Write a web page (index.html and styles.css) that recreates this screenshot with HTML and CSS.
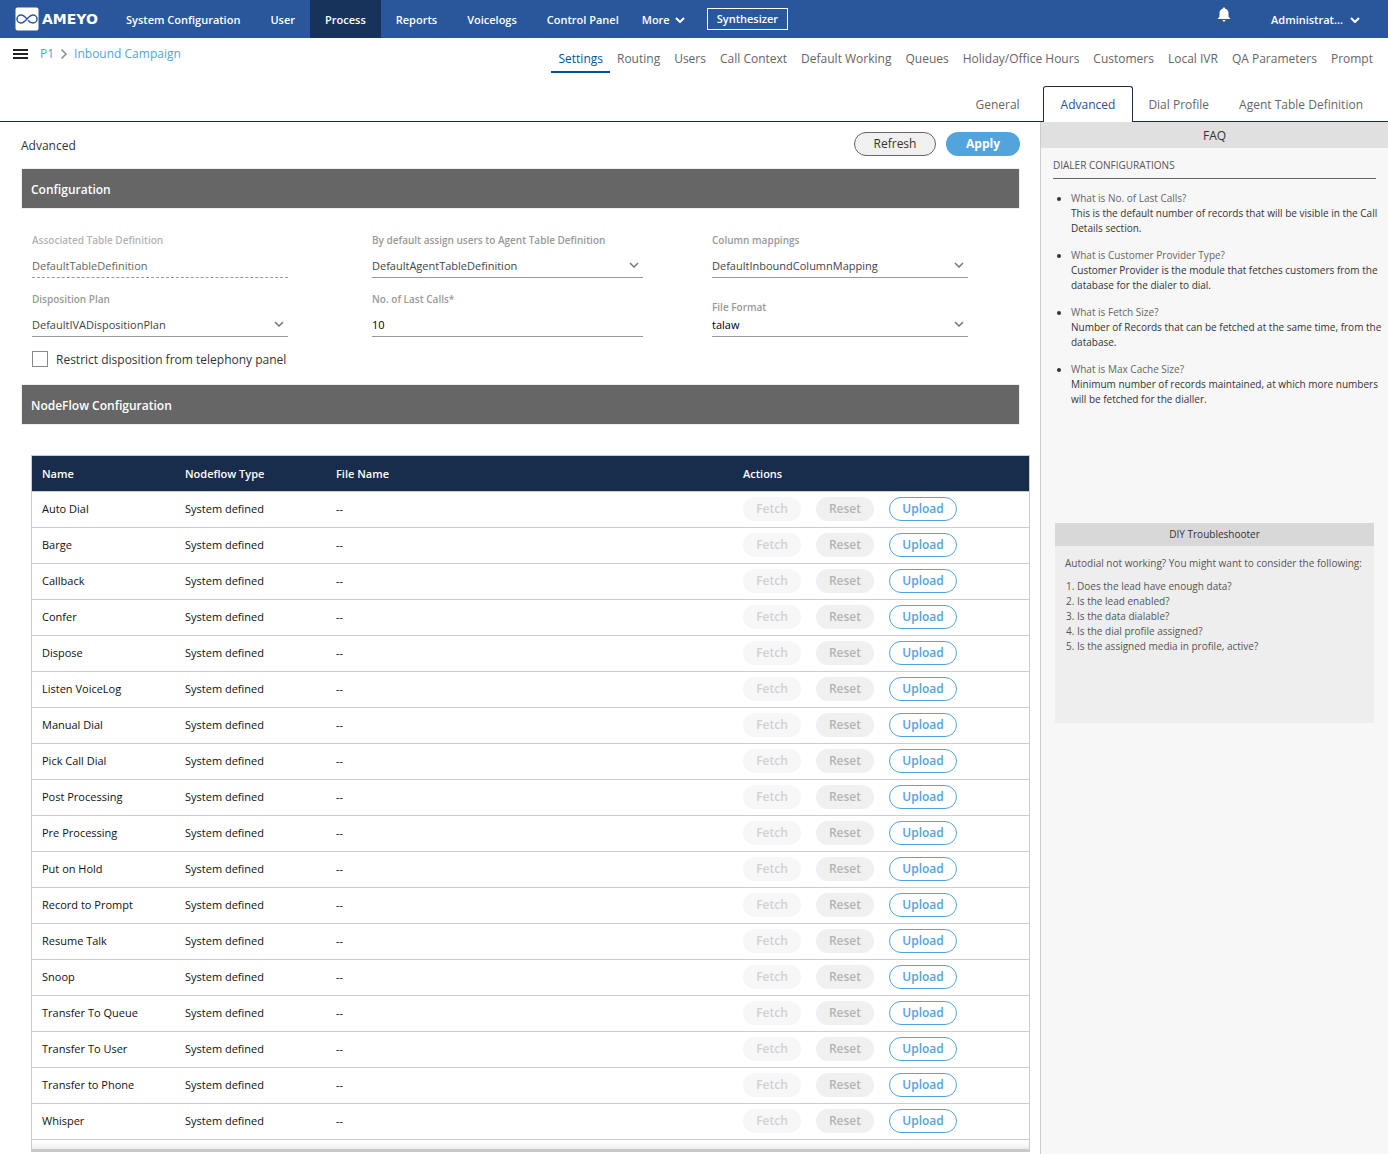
FILE: index.html
```html
<!DOCTYPE html>
<html lang="en">
<head>
    <meta charset="UTF-8">
    <meta name="viewport" content="width=device-width, initial-scale=1.0">
    <title>Ameyo - Inbound Campaign</title>
    <link rel="stylesheet" href="styles.css">
</head>
<body>
    <header class="topbar">
        <a class="logo" href="#" aria-label="Ameyo">
            <svg width="24" height="24" viewBox="0 0 24 24">
                <rect x="0.5" y="0.5" width="23" height="23" rx="2" fill="#fff"/>
                <path d="M12 12C9.5 9 8 8 6 8a4 4 0 0 0 0 8c2.500 0 4-1.700 6-4s3.500-4 6-4a4 4 0 0 1 0 8c-2 0-3.500-1-5-2.800" fill="none" stroke="#2a579b" stroke-width="1.5"/>
            </svg>
            <span>AMEYO</span>
        </a>
        <nav class="main-nav">
            <a href="#">System Configuration</a>
            <a href="#">User</a>
            <a href="#" class="active">Process</a>
            <a href="#">Reports</a>
            <a href="#">Voicelogs</a>
            <a href="#">Control Panel</a>
            <a href="#" class="more">More
                <svg width="10" height="6" viewBox="0 0 10 6"><path d="M1 1l4 4 4-4" fill="none" stroke="#fff" stroke-width="2"/></svg>
            </a>
        </nav>
        <button type="button" class="synth">Synthesizer</button>
        <button type="button" class="bell" aria-label="Notifications">
            <svg width="14" height="15" viewBox="0 0 14 15"><path d="M7 .5c.8 0 1.200.5 1.200 1.200 2 .5 3.300 2.100 3.300 4.300v3.500L13.500 12H.5l2-2.500V6c0-2.200 1.300-3.800 3.300-4.300C5.800 1 6.200.5 7 .5zM5.500 13h3c0 .9-.7 1.500-1.500 1.500S5.500 13.900 5.500 13z" fill="#fff"/></svg>
        </button>
        <button type="button" class="account">Administrat...
            <svg width="10" height="6" viewBox="0 0 10 6"><path d="M1 1l4 4 4-4" fill="none" stroke="#fff" stroke-width="2"/></svg>
        </button>
    </header>

    <div class="subbar">
        <div class="crumbs">
            <button type="button" class="menu" aria-label="Menu"><i></i><i></i><i></i></button>
            <a href="#">P1</a>
            <svg width="8" height="10" viewBox="0 0 8 10"><path d="M1.5 .5L6 5 1.500 9.500" fill="none" stroke="#8a8a8a" stroke-width="1.5"/></svg>
            <a href="#">Inbound Campaign</a>
        </div>
        <nav class="sub-nav">
            <a href="#" class="active">Settings</a>
            <a href="#">Routing</a>
            <a href="#">Users</a>
            <a href="#">Call Context</a>
            <a href="#">Default Working</a>
            <a href="#">Queues</a>
            <a href="#">Holiday/Office Hours</a>
            <a href="#">Customers</a>
            <a href="#">Local IVR</a>
            <a href="#">QA Parameters</a>
            <a href="#">Prompt</a>
        </nav>
    </div>

    <nav class="tabs">
        <a href="#">General</a>
        <a href="#" class="active">Advanced</a>
        <a href="#">Dial Profile</a>
        <a href="#">Agent Table Definition</a>
    </nav>

    <div class="page">
        <main class="content">
            <div class="title-row">
                <h1>Advanced</h1>
                <button type="button" class="btn-refresh">Refresh</button>
                <button type="button" class="btn-apply">Apply</button>
            </div>

            <h2 class="section-bar">Configuration</h2>
            <form class="config">
                <div class="field disabled">
                    <label for="tableDef">Associated Table Definition</label>
                    <input type="text" id="tableDef" value="DefaultTableDefinition" disabled>
                </div>
                <div class="field wide">
                    <label for="agentDef">By default assign users to Agent Table Definition</label>
                    <select id="agentDef"><option>DefaultAgentTableDefinition</option></select>
                </div>
                <div class="field">
                    <label for="mapping">Column mappings</label>
                    <select id="mapping"><option>DefaultInboundColumnMapping</option></select>
                </div>
                <div class="field">
                    <label for="plan">Disposition Plan</label>
                    <select id="plan"><option>DefaultIVADispositionPlan</option></select>
                </div>
                <div class="field wide">
                    <label for="lastCalls">No. of Last Calls*</label>
                    <input type="text" id="lastCalls" class="dark" value="10">
                </div>
                <div class="field close">
                    <label for="format">File Format</label>
                    <select id="format" class="dark"><option>talaw</option></select>
                </div>
                <div class="check">
                    <input type="checkbox" id="restrict">
                    <label for="restrict">Restrict disposition from telephony panel</label>
                </div>
            </form>

            <h2 class="section-bar">NodeFlow Configuration</h2>
            <div class="table-box">
                <table>
                    <thead>
                        <tr>
                            <th class="col-name">Name</th>
                            <th class="col-type">Nodeflow Type</th>
                            <th class="col-file">File Name</th>
                            <th>Actions</th>
                        </tr>
                    </thead>
                    <tbody id="nodeflows"></tbody>
                </table>
            </div>
        </main>

        <aside class="help">
            <h2>FAQ</h2>
            <section class="faq">
                <h3>DIALER CONFIGURATIONS</h3>
                <ul>
                    <li><span>What is No. of Last Calls?</span><p>This is the default number of records that will be visible in the Call Details section.</p></li>
                    <li><span>What is Customer Provider Type?</span><p>Customer Provider is the module that fetches customers from the database for the dialer to dial.</p></li>
                    <li><span>What is Fetch Size?</span><p>Number of Records that can be fetched at the same time, from the database.</p></li>
                    <li><span>What is Max Cache Size?</span><p>Minimum number of records maintained, at which more numbers will be fetched for the dialler.</p></li>
                </ul>
            </section>
            <section class="diy">
                <h3>DIY Troubleshooter</h3>
                <p>Autodial not working? You might want to consider the following:</p>
                <ol>
                    <li>Does the lead have enough data?</li>
                    <li>Is the lead enabled?</li>
                    <li>Is the data dialable?</li>
                    <li>Is the dial profile assigned?</li>
                    <li>Is the assigned media in profile, active?</li>
                </ol>
            </section>
        </aside>
    </div>

    <script>
        const nodeflows = ["Auto Dial", "Barge", "Callback", "Confer", "Dispose", "Listen VoiceLog",
            "Manual Dial", "Pick Call Dial", "Post Processing", "Pre Processing", "Put on Hold",
            "Record to Prompt", "Resume Talk", "Snoop", "Transfer To Queue", "Transfer To User",
            "Transfer to Phone", "Whisper"];

        document.getElementById("nodeflows").innerHTML = nodeflows.map(name => `
            <tr>
                <td>${name}</td>
                <td>System defined</td>
                <td>--</td>
                <td>
                    <div class="actions">
                        <button type="button" class="fetch" disabled>Fetch</button>
                        <button type="button" class="reset" disabled>Reset</button>
                        <button type="button" class="upload">Upload</button>
                    </div>
                </td>
            </tr>`).join("");
    </script>
</body>
</html>
```
FILE: styles.css
```css
* {
    box-sizing: border-box;
}
body {
    margin: 0;
    min-height: 100vh;
    display: flex;
    flex-direction: column;
    font-family: "Open Sans", "Noto Sans", sans-serif;
    font-size: 12px;
    line-height: 16px;
    color: #333;
    background: #fff;
}
a {
    color: inherit;
    text-decoration: none;
}
h1, h2, h3, p, ul, ol {
    margin: 0;
    padding: 0;
    font-weight: 400;
}
button, input, select {
    font: inherit;
    color: inherit;
    margin: 0;
}
button {
    padding: 0;
    border: none;
    background: none;
    cursor: pointer;
}

/* top bar */
.topbar {
    display: flex;
    align-items: center;
    height: 38px;
    padding: 0 28px 0 15px;
    background: #2a579b;
    color: #fff;
    font-size: 11px;
    font-weight: 600;
}
.logo {
    display: flex;
    align-items: center;
    gap: 3px;
    width: 96px;
    font: bold 14px "DejaVu Sans", sans-serif;
}
.main-nav {
    display: flex;
    align-self: stretch;
}
.main-nav a {
    display: flex;
    align-items: center;
    padding: 2px 15px 0;
}
.main-nav .active {
    background: #18335b;
}
.main-nav .more {
    gap: 5px;
    padding: 2px 22px 0 8px;
}
.synth {
    height: 22px;
    padding: 0 9px;
    border: 1px solid #fff;
}
.bell {
    margin: 0 40px 8px auto;
    height: 16px;
}
.account {
    display: flex;
    align-items: center;
    gap: 7px;
    padding-top: 2px;
}

/* breadcrumb and sub navigation */
.subbar {
    display: flex;
    justify-content: space-between;
    height: 48px;
    padding: 0 8px 0 13px;
}
.crumbs {
    display: flex;
    align-items: center;
    gap: 6px;
    height: 32px;
    color: #51a4dc;
}
.menu {
    display: flex;
    flex-direction: column;
    gap: 2px;
    margin-right: 6px;
}
.menu i {
    width: 15px;
    height: 2px;
    background: #222;
}
.sub-nav {
    display: flex;
    height: 35px;
    color: #666;
    font-weight: 500;
}
.sub-nav a {
    padding: 13px 7px 0;
}
.sub-nav .active {
    color: #00539b;
    border-bottom: 2px solid #00539b;
}

/* tabs */
.tabs {
    display: flex;
    justify-content: flex-end;
    height: 36px;
    padding-right: 10px;
    border-bottom: 1px solid #182c4c;
    color: #666;
    font-weight: 500;
}
.tabs a {
    height: 36px;
    padding: 10px 14px 0;
    border: 1px solid transparent;
    border-bottom: none;
}
.tabs .active {
    margin-left: 8px;
    padding: 10px 17px 0;
    border-color: #182c4c;
    border-radius: 3px 3px 0 0;
    background: #fff;
    color: #2a4f9b;
}

.page {
    display: flex;
    flex: 1;
}
.content {
    flex: 1;
    padding: 0 20px 0 21px;
}
.title-row {
    display: flex;
    align-items: center;
    gap: 10px;
    height: 46px;
    padding-bottom: 2px;
}
.title-row h1 {
    flex: 1;
    padding-top: 4px;
    font-size: 12px;
}
.btn-refresh, .btn-apply {
    height: 24px;
    border-radius: 12px;
}
.btn-refresh {
    width: 82px;
    border: 1px solid #666;
    background: #f0f0f0;
    font-weight: 500;
}
.btn-apply {
    width: 74px;
    background: #51a4dc;
    color: #fff;
    font-weight: 700;
}
.section-bar {
    height: 41px;
    padding: 0 9px;
    border: 1px solid #eee;
    background: #666;
    color: #fff;
    font-size: 12px;
    font-weight: 600;
    line-height: 41px;
}

/* configuration form */
.config {
    display: grid;
    grid-template-columns: 340px 340px 1fr;
    grid-template-rows: 59px 59px 33px;
    padding: 24px 0 0 11px;
}
.field {
    display: flex;
    flex-direction: column;
    gap: 5px;
    width: 256px;
}
.field label {
    color: #999;
    font-size: 10px;
    font-weight: 600;
    line-height: 15px;
}
.wide {
    width: 271px;
}
.close {
    gap: 0;
    padding-top: 11px;
}
.close label {
    line-height: 9px;
}
.field input, .field select {
    width: 100%;
    height: 25px;
    padding: 0;
    border: none;
    border-bottom: 1px solid #999;
    border-radius: 0;
    outline: none;
    appearance: none;
    background: none;
    color: #444;
    font-size: 11px;
}
.field select {
    padding-top: 1px;
    background: url("data:image/svg+xml,%3Csvg xmlns='http://www.w3.org/2000/svg' width='10' height='6'%3E%3Cpath d='M1 1l4 4 4-4' fill='none' stroke='%23777' stroke-width='1.500'/%3E%3C/svg%3E") no-repeat right 4px center;
}
.field .dark {
    color: #000;
}
.disabled label {
    color: #b3b3b3;
}
.disabled input {
    border-bottom-style: dashed;
    color: #666;
}
.check {
    display: flex;
    gap: 8px;
    grid-column: 1 / -1;
    line-height: 17px;
}
.check input {
    appearance: none;
    width: 16px;
    height: 16px;
    border: 1px solid #888;
    background: #fff;
}

/* nodeflow table */
.table-box {
    margin: 30px -10px 0 10px;
    padding-bottom: 9px;
    border: 1px solid #ccc;
    border-bottom: 3px solid #c8c8c8;
    background: linear-gradient(to top, #eee, #fff 8px);
}
table {
    width: 100%;
    border-collapse: collapse;
    table-layout: fixed;
    background: #fff;
    color: #111;
    font-size: 11px;
}
th, td {
    height: 36px;
    padding: 0 0 0 10px;
    border-bottom: 1px solid #ccc;
    text-align: left;
}
th {
    height: 35px;
    padding-top: 2px;
    background: #182c4c;
    color: #fff;
    font-weight: 600;
}
.col-name {
    width: 143px;
}
.col-type {
    width: 151px;
}
.col-file {
    width: 407px;
}
.actions {
    display: flex;
    gap: 15px;
}
.actions button {
    width: 58px;
    height: 24px;
    border-radius: 12px;
    font-size: 12px;
    font-weight: 600;
}
.actions .fetch {
    background: #f7f7f7;
    color: #d0d0d0;
}
.actions .reset {
    background: #f0f0f0;
    color: #b3b3b3;
}
.actions .upload {
    width: 68px;
    border: 1px solid #51a4dc;
    background: #fff;
    color: #51a4dc;
}

/* help column */
.help {
    flex: 0 0 348px;
    border-left: 1px solid #ccc;
    background: #f7f7f7;
    font-size: 10px;
    line-height: 15px;
}
.help h2 {
    height: 26px;
    background: #e0e0e0;
    font-size: 12px;
    line-height: 27px;
    text-align: center;
}
.faq {
    min-height: 375px;
    padding: 9px 12px 0;
}
.faq h3 {
    height: 22px;
    margin-bottom: 12px;
    border-bottom: 1px solid #666;
    color: #555;
    font-size: 10px;
    line-height: 17px;
}
.faq li {
    margin: 0 -12px 12px 18px;
}
.faq span {
    color: #666;
}
.diy {
    min-height: 200px;
    margin: 0 14px;
    background: #eee;
    color: #555;
}
.diy h3 {
    height: 23px;
    background: #d8d8d8;
    color: #333;
    font-size: 10px;
    line-height: 23px;
    text-align: center;
}
.diy p {
    padding: 10px 10px 8px;
}
.diy ol {
    padding-left: 22px;
}
```
